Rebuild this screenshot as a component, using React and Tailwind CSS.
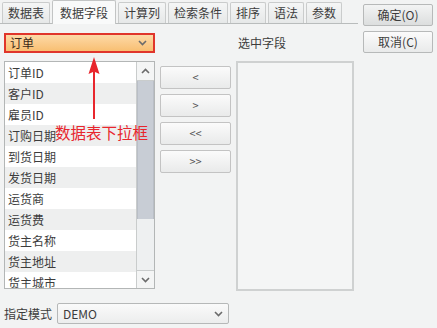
const FONT = { fontFamily: '"Noto Sans CJK SC", "Noto Sans", sans-serif' };

const tabs = ["数据表", "数据字段", "计算列", "检索条件", "排序", "语法", "参数"];
const fields = [
  "订单ID", "客户ID", "雇员ID", "订购日期", "到货日期", "发货日期",
  "运货商", "运货费", "货主名称", "货主地址", "货主城市",
];

function Chevron({ up = false, className = "" }) {
  return (
    <svg width="9" height="6" viewBox="0 0 9 6" className={className}>
      <polyline
        points={up ? "1,5 4.5,1.5 8,5" : "1,1 4.5,4.5 8,1"}
        fill="none"
        stroke="#6b6b6b"
        strokeWidth="1.6"
      />
    </svg>
  );
}

function SmallButton({ label }) {
  return (
    <div className="h-[23px] flex items-center justify-center rounded-[2px] border border-[#c3c3c3] bg-gradient-to-b from-[#fbfbfb] to-[#e9eaea] text-[11px] text-[#555]">
      {label}
    </div>
  );
}

export default function App() {
  return (
    <div
      style={FONT}
      className="relative w-[437px] h-[328px] bg-[#f2f3f3] flex text-[12px] text-[#3c3c3c] overflow-hidden"
    >
      <div className="w-[358px] flex flex-col">
        {/* tab strip */}
        <div className="h-[24px] flex items-end gap-[2px] pl-[2px] border-b border-[#b9bcbc]">
          {tabs.map((t, i) =>
            i === 1 ? (
              <div
                key={t}
                className="h-[24px] px-[7px] flex items-center border border-b-0 border-[#c2c4c4] bg-[#f9fafa] rounded-t-[2px] -mb-px"
              >
                {t}
              </div>
            ) : (
              <div
                key={t}
                className="h-[21px] px-[5px] flex items-center border border-b-0 border-[#cacccc] bg-gradient-to-b from-[#f5f6f6] to-[#e6e8e8] rounded-t-[2px]"
              >
                {t}
              </div>
            )
          )}
        </div>

        <div className="flex pl-[4px] pt-[9px]">
          {/* left: table dropdown + field list */}
          <div className="w-[151px] flex flex-col">
            <div className="h-[20px] flex items-center justify-between px-[4px] border-2 border-[#e0352b] bg-gradient-to-b from-[#fdd9a6] to-[#f8bf72]">
              <span className="text-[#3a2a1a]">订单</span>
              <Chevron className="mr-[2px]" />
            </div>
            <div className="mt-[8px] h-[228px] flex border border-[#b3b6b6] bg-white overflow-hidden">
              <div className="flex-1 flex flex-col">
                {fields.map((f, i) => (
                  <div
                    key={f}
                    className={`h-[21px] shrink-0 flex items-center pl-[3px] text-[12px] ${
                      i % 2 ? "bg-[#eeefef]" : "bg-white"
                    }`}
                  >
                    {f}
                  </div>
                ))}
              </div>
              <div className="w-[18px] flex flex-col border-l border-[#c9cccc] bg-[#eef0f1]">
                <div className="h-[19px] flex items-center justify-center border-b border-[#c9cccc] bg-[#f4f5f5]">
                  <Chevron up />
                </div>
                <div className="h-[138px] bg-[#c8cdd5] border-x border-[#b9bec6]" />
                <div className="flex-1" />
                <div className="h-[18px] flex items-center justify-center border-t border-[#c9cccc] bg-[#f4f5f5]">
                  <Chevron />
                </div>
              </div>
            </div>
          </div>

          {/* middle: move buttons */}
          <div className="w-[71px] ml-[5px] pt-[33px] flex flex-col gap-[5px]">
            <SmallButton label="<" />
            <SmallButton label=">" />
            <SmallButton label="<<" />
            <SmallButton label=">>" />
          </div>

          {/* right: selected fields */}
          <div className="w-[118px] ml-[5px] flex flex-col">
            <div className="h-[20px] flex items-center pl-[2px]">选中字段</div>
            <div className="mt-[8px] h-[230px] border-2 border-[#cfd1d1] bg-[#f4f5f5]" />
          </div>
        </div>

        {/* bottom: mode */}
        <div className="mt-[12px] pl-[4px] flex items-center gap-[5px]">
          <span>指定模式</span>
          <div className="w-[172px] h-[21px] flex items-center justify-between px-[5px] border border-[#b6b8b8] rounded-[2px] bg-gradient-to-b from-[#fafafa] to-[#eceded]">
            <span className="text-[12px]">DEMO</span>
            <Chevron />
          </div>
        </div>
      </div>

      {/* dialog buttons */}
      <div className="flex flex-col gap-[5px] pl-[5px] pt-[4px]">
        <div className="w-[70px] h-[22px] flex items-center justify-center border border-[#b7b9b9] rounded-[2px] bg-gradient-to-b from-[#f3f4f4] to-[#dcdede]">
          确定(O)
        </div>
        <div className="w-[70px] h-[22px] flex items-center justify-center border border-[#b7b9b9] rounded-[2px] bg-gradient-to-b from-[#fbfbfb] to-[#e9eaea]">
          取消(C)
        </div>
      </div>

      {/* red annotation overlay */}
      <div className="absolute left-[88px] top-[57px] w-[12px] h-[62px]">
        <svg width="12" height="62" viewBox="0 0 12 62">
          <polygon points="6,0 11.5,17 7,15 7,62 5,62 5,15 0.5,17" fill="#e8262d" />
        </svg>
      </div>
      <div className="absolute left-[55px] top-[122px] text-[15.5px] leading-[20px] text-[#e8262d]">
        数据表下拉框
      </div>
    </div>
  );
}
